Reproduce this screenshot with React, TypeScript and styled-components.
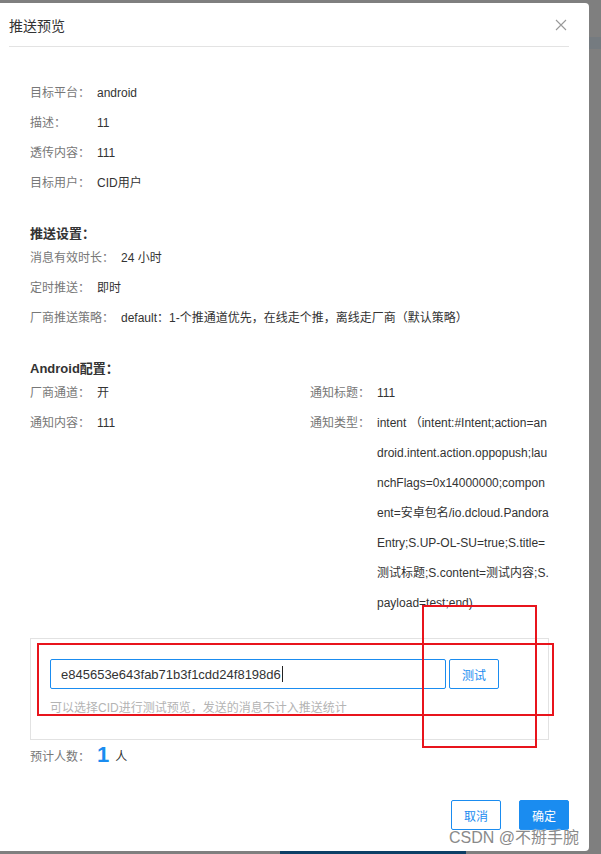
import React from "react";
import styled, { createGlobalStyle } from "styled-components";

const Global = createGlobalStyle`
  html, body { margin: 0; padding: 0; }
  body {
    background: #7f7f7f;
    font-family: "Liberation Sans", "Noto Sans CJK SC", sans-serif;
    width: 601px;
    height: 854px;
    overflow: hidden;
  }
`;

const Page = styled.div`
  position: relative;
  width: 601px;
  height: 854px;
  display: flex;
  flex-direction: column;
`;

const TopBar = styled.div`
  height: 3px;
  flex: none;
`;

const Stage = styled.div`
  display: flex;
  flex: none;
`;

const Dialog = styled.div`
  width: 589px;
  height: 848px;
  background: #fff;
  border-radius: 0 4px 4px 0;
  display: flex;
  flex-direction: column;
  box-sizing: border-box;
`;

const Side = styled.div`
  flex: 1;
  display: flex;
  flex-direction: column;
`;

const SideBand = styled.div<{ $h: number; $c: string }>`
  height: ${(p) => p.$h}px;
  background: ${(p) => p.$c};
  flex: none;
`;

const Bottom = styled.div`
  height: 3px;
  display: flex;
`;

const BottomDark = styled.div`
  margin-left: 280px;
  width: 186px;
  background: #0d3f66;
`;

const Header = styled.div`
  margin: 0 20px 0 9px;
  height: 43px;
  border-bottom: 1px solid #e3e3e3;
  display: flex;
  align-items: center;
  justify-content: space-between;
`;

const Title = styled.div`
  font-size: 14px;
  color: #333;
`;

const Close = styled.div`
  width: 12px;
  height: 12px;
  margin-right: 2px;
  display: flex;
`;

const Body = styled.div`
  padding: 31px 0 0 30px;
  display: flex;
  flex-direction: column;
`;

const Section = styled.div<{ $mt?: number }>`
  margin-top: ${(p) => p.$mt ?? 0}px;
  display: flex;
  flex-direction: column;
`;

const SectionTitle = styled.div`
  font-size: 13px;
  font-weight: 600;
  color: #333;
  height: 19px;
  line-height: 19px;
`;

const Row = styled.div`
  display: flex;
  font-size: 12px;
  line-height: 30px;
  min-height: 30px;
`;

const Label = styled.span`
  color: #777;
  min-width: 60px;
  margin-right: 7px;
  white-space: nowrap;
`;

const Value = styled.span`
  color: #333;
`;

const Grid = styled.div`
  display: grid;
  grid-template-columns: 280px 1fr;
`;

const MultiValue = styled.div`
  color: #333;
  display: flex;
  flex-direction: column;
  white-space: nowrap;
`;

const TestBox = styled.div`
  margin-top: 20px;
  width: 519px;
  height: 102px;
  border: 1px solid #e2e2e2;
  box-sizing: border-box;
  padding: 20px 0 0 19px;
  display: flex;
  flex-direction: column;
`;

const InputRow = styled.div`
  display: flex;
  gap: 3px;
`;

const Input = styled.div`
  width: 396px;
  height: 30px;
  box-sizing: border-box;
  border: 1px solid #1a8cf0;
  border-radius: 2px;
  font-size: 13px;
  color: #333;
  padding-left: 10px;
  display: flex;
  align-items: center;
`;

const Caret = styled.span`
  display: inline-block;
  width: 1px;
  height: 16px;
  background: #222;
  margin-left: 1px;
`;

const TestButton = styled.div`
  width: 50px;
  height: 30px;
  box-sizing: border-box;
  border: 1px solid #1a8cf0;
  border-radius: 2px;
  color: #1a8cf0;
  font-size: 12px;
  display: flex;
  align-items: center;
  justify-content: center;
`;

const Hint = styled.div`
  margin-top: 9px;
  font-size: 12px;
  color: #b4b4b4;
`;

const CountRow = styled.div`
  display: flex;
  align-items: center;
  font-size: 12px;
  height: 30px;
`;

const CountNum = styled.span`
  color: #1a8cf0;
  font-size: 22px;
  font-weight: bold;
  margin-right: 6px;
`;

const Footer = styled.div`
  margin-top: 30px;
  margin-right: 20px;
  display: flex;
  justify-content: flex-end;
  gap: 18px;
`;

const Btn = styled.div<{ $primary?: boolean }>`
  width: 50px;
  height: 30px;
  box-sizing: border-box;
  border-radius: 2px;
  border: 1px solid #1a8cf0;
  background: ${(p) => (p.$primary ? "#1a8cf0" : "#fff")};
  color: ${(p) => (p.$primary ? "#fff" : "#1a8cf0")};
  font-size: 12px;
  display: flex;
  align-items: center;
  justify-content: center;
`;

const RedBox = styled.div<{ $x: number; $y: number; $w: number; $h: number }>`
  position: absolute;
  left: ${(p) => p.$x}px;
  top: ${(p) => p.$y}px;
  width: ${(p) => p.$w}px;
  height: ${(p) => p.$h}px;
  border: 2px solid #e8141c;
  box-sizing: border-box;
  pointer-events: none;
`;

const Watermark = styled.div`
  position: absolute;
  left: 449px;
  top: 824px;
  font-size: 16px;
  color: #8a8a8a;
  white-space: nowrap;
  text-shadow: 0 0 1px #fff, 0 0 1px #fff;
`;

const intentLines = [
  "intent （intent:#Intent;action=an",
  "droid.intent.action.oppopush;lau",
  "nchFlags=0x14000000;compon",
  "ent=安卓包名/io.dcloud.Pandora",
  "Entry;S.UP-OL-SU=true;S.title=",
  "测试标题;S.content=测试内容;S.",
  "payload=test;end)",
];

export default function App() {
  return (
    <Page>
      <Global />
      <TopBar />
      <Stage>
        <Dialog>
          <Header>
            <Title>推送预览</Title>
            <Close>
              <svg width="12" height="12" viewBox="0 0 12 12">
                <path d="M1 1 L11 11 M11 1 L1 11" stroke="#999" strokeWidth="1.1" fill="none" />
              </svg>
            </Close>
          </Header>
          <Body>
            <Section>
              <Row><Label>目标平台：</Label><Value>android</Value></Row>
              <Row><Label>描述：</Label><Value>11</Value></Row>
              <Row><Label>透传内容：</Label><Value>111</Value></Row>
              <Row><Label>目标用户：</Label><Value>CID用户</Value></Row>
            </Section>
            <Section $mt={26}>
              <SectionTitle>推送设置：</SectionTitle>
              <Row><Label>消息有效时长：</Label><Value>24 小时</Value></Row>
              <Row><Label>定时推送：</Label><Value>即时</Value></Row>
              <Row><Label>厂商推送策略：</Label><Value>default：1-个推通道优先，在线走个推，离线走厂商（默认策略）</Value></Row>
            </Section>
            <Section $mt={26}>
              <SectionTitle>Android配置：</SectionTitle>
              <Grid>
                <Row><Label>厂商通道：</Label><Value>开</Value></Row>
                <Row><Label>通知标题：</Label><Value>111</Value></Row>
                <Row><Label>通知内容：</Label><Value>111</Value></Row>
                <Row>
                  <Label>通知类型：</Label>
                  <MultiValue>
                    {intentLines.map((l) => (
                      <span key={l}>{l}</span>
                    ))}
                  </MultiValue>
                </Row>
              </Grid>
            </Section>
            <TestBox>
              <InputRow>
                <Input>
                  e845653e643fab71b3f1cdd24f8198d6<Caret />
                </Input>
                <TestButton>测试</TestButton>
              </InputRow>
              <Hint>可以选择CID进行测试预览，发送的消息不计入推送统计</Hint>
            </TestBox>
            <CountRow>
              <Label>预计人数：</Label>
              <CountNum>1</CountNum>
              <Value>人</Value>
            </CountRow>
          </Body>
          <Footer>
            <Btn>取消</Btn>
            <Btn $primary>确定</Btn>
          </Footer>
        </Dialog>
        <Side>
          <SideBand $h={34} $c="#7f7f7f" />
          <SideBand $h={12} $c="#757b80" />
          <SideBand $h={802} $c="#7f7f7f" />
        </Side>
      </Stage>
      <Bottom>
        <BottomDark />
      </Bottom>
      <RedBox $x={37} $y={643} $w={517} $h={73} />
      <RedBox $x={422} $y={605} $w={115} $h={143} />
      <Watermark>CSDN @不掰手腕</Watermark>
    </Page>
  );
}
